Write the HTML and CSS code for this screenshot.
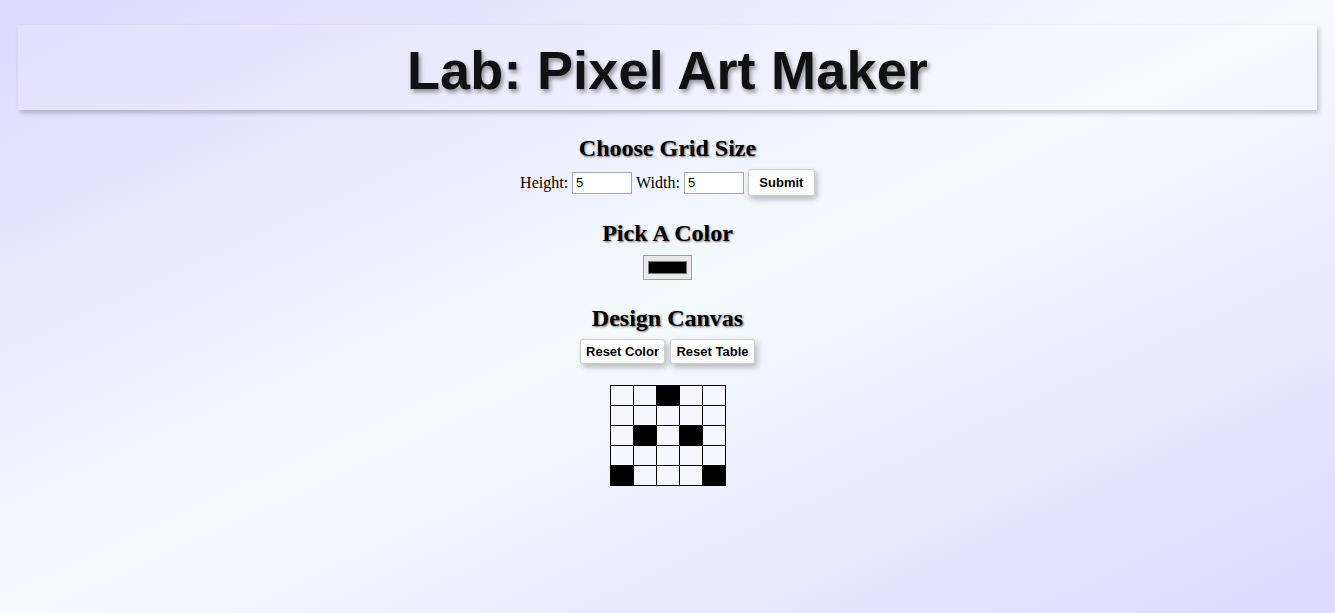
FILE: index.html
```html
<!DOCTYPE html>
<html lang="en">
<head>
<meta charset="utf-8">
<title>Pixel Art Maker</title>
<link rel="stylesheet" href="styles.css">
</head>
<body>
  <header class="banner">
    <h1 class="title">Lab: Pixel Art Maker</h1>
  </header>

  <h2 class="section-title first">Choose Grid Size</h2>
  <form class="size-form">
    <label class="field">Height: <input class="num-input" type="text" value="5"></label>
    <label class="field">Width: <input class="num-input" type="text" value="5"></label>
    <button class="btn btn-submit" type="button">Submit</button>
  </form>

  <h2 class="section-title">Pick A Color</h2>
  <div class="color-row"><input class="color-input" type="color" value="#000000"></div>

  <h2 class="section-title third">Design Canvas</h2>
  <div class="btn-row">
    <button class="btn btn-reset" type="button">Reset Color</button>
    <button class="btn btn-reset" type="button">Reset Table</button>
  </div>

  <table class="canvas">
    <tr><td></td><td></td><td class="on"></td><td></td><td></td></tr>
    <tr><td></td><td></td><td></td><td></td><td></td></tr>
    <tr><td></td><td class="on"></td><td></td><td class="on"></td><td></td></tr>
    <tr><td></td><td></td><td></td><td></td><td></td></tr>
    <tr><td class="on"></td><td></td><td></td><td></td><td class="on"></td></tr>
  </table>
</body>
</html>
```

FILE: styles.css
```css
html {
  min-height: 100%;
  background: linear-gradient(to bottom right, #ddd8ff 0%, #f5fbfc 50%, #ddd8ff 100%);
}

body {
  margin: 8px;
  text-align: center;
  font-family: "Liberation Serif", "Times New Roman", serif;
  font-size: 16px;
  color: #000;
}

.banner {
  margin: 17px 10px 0;
  height: 85px;
  display: flex;
  align-items: center;
  justify-content: center;
  background: rgba(255, 255, 255, 0.12);
  box-shadow: 2px 3px 5px rgba(0, 0, 0, 0.22);
}

.title {
  margin: 4px 0 0;
  font-family: "Comic Sans MS", "Liberation Sans", Arial, sans-serif;
  font-weight: bold;
  font-size: 54px;
  letter-spacing: 0.2px;
  line-height: 1;
  color: #111;
  text-shadow: 2px 3px 4px rgba(0, 0, 0, 0.4);
}

.section-title {
  margin: 23px 0 7px;
  font-size: 24px;
  line-height: 28px;
  font-weight: bold;
  text-shadow: 1px 1px 2px rgba(0, 0, 0, 0.55);
}

.section-title.first {
  margin-top: 24px;
}

.section-title.third {
  margin-top: 24px;
}

.size-form {
  margin: 0;
  display: flex;
  justify-content: center;
  align-items: center;
  gap: 4px;
  height: 27px;
}

.field {
  display: inline-flex;
  align-items: center;
  gap: 4px;
}

.num-input {
  box-sizing: border-box;
  width: 60px;
  height: 22px;
  padding: 0 3px;
  border: 1px solid #a8a8a8;
  background: #fff;
  font-family: "Liberation Sans", Arial, sans-serif;
  font-size: 13px;
}

.btn {
  box-sizing: border-box;
  background: #fff;
  border: 1px solid #cfcfcf;
  border-radius: 3px;
  font-family: "Liberation Sans", Arial, sans-serif;
  font-weight: bold;
  font-size: 13px;
  color: #000;
  box-shadow: 2px 3px 6px rgba(0, 0, 0, 0.28);
  cursor: pointer;
}

.btn-submit {
  width: 67px;
  height: 27px;
  padding: 0;
}

.color-row {
  height: 25px;
  margin-top: 8px;
  display: flex;
  justify-content: center;
}

.color-input {
  box-sizing: border-box;
  width: 49px;
  height: 25px;
  margin: 0;
  padding: 1px 2px;
  border: 1px solid #a0a0a0;
  background: #e9e9e9;
}

.btn-row {
  display: flex;
  justify-content: center;
  gap: 5px;
}

.btn-reset {
  width: 85px;
  height: 25px;
  padding: 0;
}

.canvas {
  margin: 21px auto 0;
  border-collapse: collapse;
}

.canvas td {
  width: 22px;
  height: 19px;
  padding: 0;
  border: 1px solid #000;
  background: #f5f6fb;
}

.canvas td.on {
  background: #000;
}
```
